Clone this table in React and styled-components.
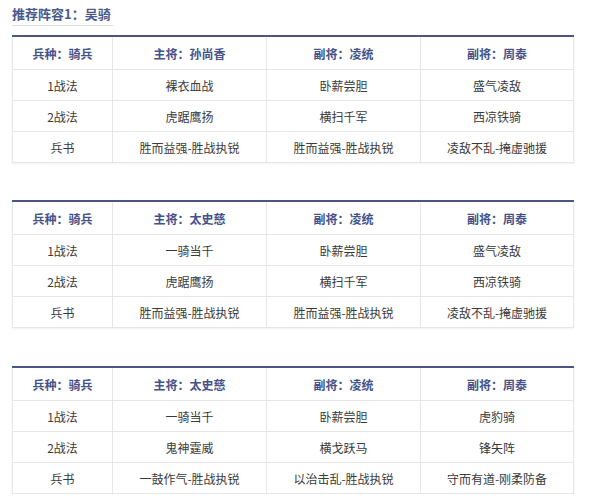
import React from "react";
import styled, { createGlobalStyle } from "styled-components";

const Global = createGlobalStyle`
  html, body { margin: 0; padding: 0; background: #fff; }
  body { font-family: "Noto Sans CJK SC", "Noto Sans", sans-serif; }
`;

const Page = styled.div`
  padding: 0 25px 0 12px;
  width: 561px;
`;

const Title = styled.div`
  display: inline-block;
  margin-top: 4px;
  height: 20px;
  line-height: 20px;
  padding-right: 2px;
  padding-bottom: 1px;
  border-bottom: 1px solid #dcdcdc;
  font-size: 13px;
  font-weight: bold;
  color: #4b5a8c;
`;

const Table = styled.table`
  width: 561px;
  border-collapse: collapse;
  table-layout: fixed;
  margin-top: ${(p) => p.$gap}px;
  border-top: 2px solid #4b5684;
  box-shadow: 0 1px 2px rgba(0, 0, 0, 0.06);
`;

const Th = styled.th`
  height: 32px;
  padding: 0;
  border: 1px solid #e6e6e6;
  border-top: none;
  font-size: 12px;
  font-weight: bold;
  color: #44528a;
  text-align: center;
`;

const Td = styled.td`
  height: 30px;
  padding: 0;
  border: 1px solid #e6e6e6;
  font-size: 12px;
  color: #3a3a3a;
  text-align: center;
`;

const tables = [
  {
    gap: 9,
    head: ["兵种：骑兵", "主将：孙尚香", "副将：凌统", "副将：周泰"],
    rows: [
      ["1战法", "裸衣血战", "卧薪尝胆", "盛气凌敌"],
      ["2战法", "虎踞鹰扬", "横扫千军", "西凉铁骑"],
      ["兵书", "胜而益强-胜战执锐", "胜而益强-胜战执锐", "凌敌不乱-掩虚驰援"],
    ],
  },
  {
    gap: 37,
    head: ["兵种：骑兵", "主将：太史慈", "副将：凌统", "副将：周泰"],
    rows: [
      ["1战法", "一骑当千", "卧薪尝胆", "盛气凌敌"],
      ["2战法", "虎踞鹰扬", "横扫千军", "西凉铁骑"],
      ["兵书", "胜而益强-胜战执锐", "胜而益强-胜战执锐", "凌敌不乱-掩虚驰援"],
    ],
  },
  {
    gap: 38,
    head: ["兵种：骑兵", "主将：太史慈", "副将：凌统", "副将：周泰"],
    rows: [
      ["1战法", "一骑当千", "卧薪尝胆", "虎豹骑"],
      ["2战法", "鬼神霆威", "横戈跃马", "锋矢阵"],
      ["兵书", "一鼓作气-胜战执锐", "以治击乱-胜战执锐", "守而有道-刚柔防备"],
    ],
  },
];

const widths = [100, 154, 154, 153];

export default function App() {
  return (
    <>
      <Global />
      <Page>
        <Title>推荐阵容1：吴骑</Title>
        {tables.map((t, i) => (
          <Table key={i} $gap={t.gap}>
            <colgroup>
              {widths.map((w, j) => (
                <col key={j} style={{ width: w }} />
              ))}
            </colgroup>
            <thead>
              <tr>
                {t.head.map((h, j) => (
                  <Th key={j}>{h}</Th>
                ))}
              </tr>
            </thead>
            <tbody>
              {t.rows.map((r, k) => (
                <tr key={k}>
                  {r.map((c, j) => (
                    <Td key={j}>{c}</Td>
                  ))}
                </tr>
              ))}
            </tbody>
          </Table>
        ))}
      </Page>
    </>
  );
}
